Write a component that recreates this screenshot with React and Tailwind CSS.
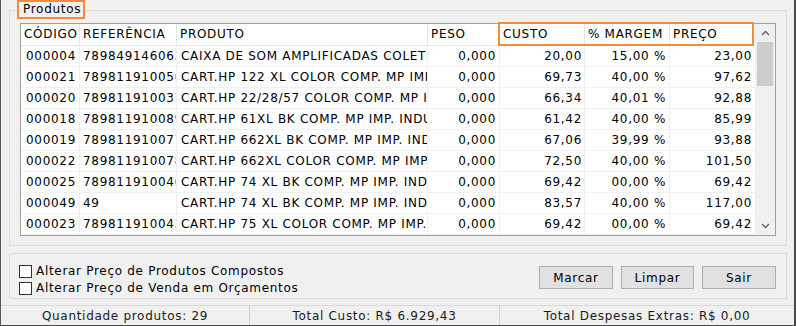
import React from "react";

const rows = [
  ["000004", "7898491460633", "CAIXA DE SOM AMPLIFICADAS COLETIVA", "0,000", "20,00", "15,00 %", "23,00"],
  ["000021", "7898119100560", "CART.HP 122 XL COLOR COMP. MP IMP. INDUSTRIAL", "0,000", "69,73", "40,00 %", "97,62"],
  ["000020", "7898119100379", "CART.HP 22/28/57 COLOR COMP. MP IMP. IND", "0,000", "66,34", "40,01 %", "92,88"],
  ["000018", "7898119100898", "CART.HP 61XL BK COMP. MP IMP. INDUSTRIAL", "0,000", "61,42", "40,00 %", "85,99"],
  ["000019", "7898119100775", "CART.HP 662XL BK COMP. MP IMP. INDUSTRIAL", "0,000", "67,06", "39,99 %", "93,88"],
  ["000022", "7898119100782", "CART.HP 662XL COLOR COMP. MP IMP. INDUSTRIAL", "0,000", "72,50", "40,00 %", "101,50"],
  ["000025", "7898119100409", "CART.HP 74 XL BK COMP. MP IMP. INDUSTRIAL", "0,000", "69,42", "00,00 %", "69,42"],
  ["000049", "49", "CART.HP 74 XL BK COMP. MP IMP. INDUSTRIAL", "0,000", "83,57", "40,00 %", "117,00"],
  ["000023", "7898119100430", "CART.HP 75 XL COLOR COMP. MP IMP. INDUSTRIAL", "0,000", "69,42", "00,00 %", "69,42"],
];

const cols = [
  { w: "w-[59px]", align: "right", pad: "pr-[3px] pl-[1px]" },
  { w: "w-[97px]", align: "left", pad: "pl-[3px]" },
  { w: "w-[251px]", align: "left", pad: "pl-[4px]" },
  { w: "w-[72px]", align: "right", pad: "pr-[3px]" },
  { w: "w-[85px]", align: "right", pad: "pr-[2px]" },
  { w: "w-[85px]", align: "right", pad: "pr-[3px]" },
  { w: "w-[85px]", align: "right", pad: "pr-[3px]" },
];

const headers = ["CÓDIGO", "REFERÊNCIA", "PRODUTO", "PESO", "CUSTO", "% MARGEM", "PREÇO"];

function Cell({ col, children, header, last }) {
  return (
    <div
      className={`${col.w} shrink-0 h-full overflow-hidden whitespace-nowrap ${
        last ? "" : header ? "border-r border-r-[#e5e5e5]" : "border-r border-r-[#f0f0f0]"
      } ${header ? "pl-[3px] text-left" : col.pad + (col.align === "right" ? " text-right" : " text-left")}`}
    >
      {children}
    </div>
  );
}

function Check({ label }) {
  return (
    <div className="flex items-center h-[17px]">
      <div className="w-[13px] h-[13px] border border-[#333] bg-white shrink-0" />
      <span className="ml-[4px] leading-[17px]">{label}</span>
    </div>
  );
}

function Btn({ label, w }) {
  return (
    <div className={`${w} h-[23px] bg-[#e1e1e1] border border-[#adadad] flex items-center justify-center`}>
      {label}
    </div>
  );
}

export default function App() {
  return (
    <div className="relative w-[796px] h-[326px] bg-[#f0f0f0] border-l border-l-[#5a5a5a] border-r-2 border-r-[#4a4a4a] border-b border-b-[#4a4a4a] flex flex-col font-['DejaVu_Sans',sans-serif] text-[12px] tracking-[0.7px] text-black overflow-hidden">
      {/* Produtos group */}
      <div className="relative ml-[8px] mt-[10px] w-[778px] h-[236px] border border-[#dcdcdc] pl-[10px] pt-[12px]">
        <div className="absolute left-[11px] top-[-10px] px-[2px] bg-[#f0f0f0] leading-[16px]">Produtos</div>
        <div className="w-[756px] h-[213px] border border-[#a0a0a0] bg-white flex">
          <div className="flex flex-col w-[734px]">
            <div className="flex h-[22px] leading-[21px] border-b border-b-[#e5e5e5]">
              {headers.map((h, i) => (
                <Cell key={i} col={cols[i]} header last={i === 6}>
                  {h}
                </Cell>
              ))}
            </div>
            {rows.map((r, ri) => (
              <div key={ri} className="flex h-[21px] leading-[20px] border-b border-b-[#f0f0f0]">
                {r.map((v, i) => (
                  <Cell key={i} col={cols[i]} last={i === 6}>
                    {v}
                  </Cell>
                ))}
              </div>
            ))}
          </div>
          <div className="w-[20px] h-full bg-[#f0f0f0] flex flex-col items-center">
            <div className="h-[18px] w-full flex items-center justify-center">
              <svg width="9" height="6" viewBox="0 0 9 6">
                <path d="M1 5 L4.5 1.5 L8 5" fill="none" stroke="#606060" strokeWidth="1.4" />
              </svg>
            </div>
            <div className="w-[16px] h-[44px] bg-[#cdcdcd]" />
            <div className="flex-1" />
            <div className="h-[18px] w-full flex items-center justify-center">
              <svg width="9" height="6" viewBox="0 0 9 6">
                <path d="M1 1 L4.5 4.5 L8 1" fill="none" stroke="#606060" strokeWidth="1.4" />
              </svg>
            </div>
          </div>
        </div>
      </div>

      {/* Options group */}
      <div className="ml-[8px] mt-[7px] w-[778px] h-[46px] border border-[#dcdcdc] flex pl-[9px] pr-[10px]">
        <div className="flex flex-col pt-[9px]">
          <Check label="Alterar Preço de Produtos Compostos" />
          <Check label="Alterar Preço de Venda em Orçamentos" />
        </div>
        <div className="flex-1" />
        <div className="flex gap-[8px] pt-[12px]">
          <Btn label="Marcar" w="w-[74px]" />
          <Btn label="Limpar" w="w-[73px]" />
          <Btn label="Sair" w="w-[74px]" />
        </div>
      </div>

      {/* Status bar */}
      <div className="mt-auto h-[20px] border-t border-t-[#dadada] flex text-[#1a1a1a]">
        <div className="w-[249px] flex items-center justify-center border-r border-r-[#d0d0d0]">Quantidade produtos: 29</div>
        <div className="w-[250px] flex items-center justify-center border-r border-r-[#d0d0d0]">Total Custo: R$ 6.929,43</div>
        <div className="flex-1 flex items-center justify-center">Total Despesas Extras: R$ 0,00</div>
      </div>

      {/* annotation overlays */}
      <div className="absolute left-[16px] top-0 w-[68px] h-[19px] border-2 border-[#f58a3c]" />
      <div className="absolute left-[497px] top-[22px] w-[256px] h-[24px] border-2 border-[#f58a3c]" />
    </div>
  );
}
